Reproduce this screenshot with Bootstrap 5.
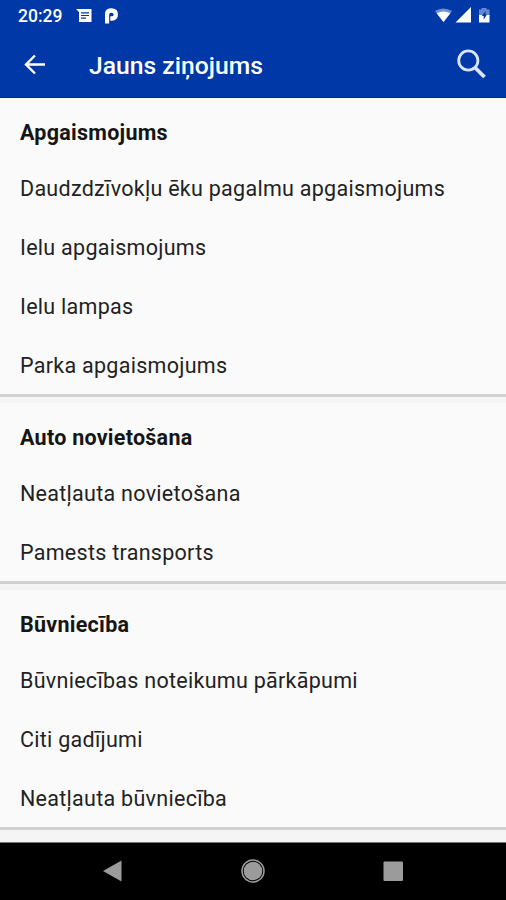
<!DOCTYPE html>
<html lang="lv">
<head>
<meta charset="utf-8">
<meta name="viewport" content="width=device-width, initial-scale=1">
<title>Jauns ziņojums</title>
<link href="https://cdn.jsdelivr.net/npm/bootstrap@5.3.0/dist/css/bootstrap.min.css" rel="stylesheet">
<style>
body{font-family:Roboto,sans-serif;background:#fafafa;color:#151515;height:900px;overflow:hidden}
svg{display:block;flex:none}
.top-area{background:#0038a7;color:#fff;height:98px;border-bottom:1px solid #00249a}
.status{height:32px;padding:0 15px 0 18px}
.clock{font-size:17.500px;font-weight:500;line-height:32px;width:58px;white-space:nowrap}
.appbar{height:66px;padding:0 18px 0 24px}
.title{font-size:24.700px;font-weight:500;line-height:30px;margin:0 0 0 43px;padding-top:2px}
.heading span,.entry span{white-space:nowrap}
.group{background:#fafafa;border-bottom:3px solid #d1d1d1;margin-bottom:6px}
.heading{height:60px;padding:10px 20px 0;font-size:21.500px;letter-spacing:.26px;font-weight:700;margin:0;color:#151515}
.entry{height:59px;padding:4px 20px 0;font-size:21.500px;letter-spacing:.28px;color:#222}
.page{background:#f5f5f5}
.sysbar{height:58px;background:#000;border-top:1px solid #777;padding:0 100px 2px}
</style>
<script src="https://cdn.jsdelivr.net/npm/bootstrap@5.3.0/dist/js/bootstrap.bundle.min.js"></script>
</head>
<body class="d-flex flex-column">
<header class="top-area flex-shrink-0">
  <div class="status d-flex align-items-center">
    <div class="clock">20:29</div>
    <svg width="17" height="14" viewBox="0 0 17 14"><path d="M0 0H15.500V13H3V3Z" fill="#fff"/><path d="M5 3.800H13M5 6.500H13M5 9.200H10" stroke="#0038a7" stroke-width="1.200"/></svg>
    <svg class="ms-2 ps-1" width="24" height="17" viewBox="0 0 20 17"><path d="M2 15.500V6.800Q2 2.500 6.300 2.500Q10.800 2.500 10.800 6.500Q10.800 10.500 6.800 10.500H5.300" fill="none" stroke="#fff" stroke-width="4.300"/></svg>
    <svg class="ms-auto" width="56" height="18" viewBox="0 0 56 18"><path d="M0 4Q8 -1 17 4L8.500 15Z" fill="#6c94d8"/><path d="M1.700 6.200Q8.500 2.600 15.300 6.200L8.500 15Z" fill="#fff"/><path d="M20.500 15.500L36 0V15.500Z" fill="#fff"/><path d="M44 2.500H46.500V1H51.500V2.500H54.500V9H44Z" fill="#6388cf"/><path d="M44 8H54.500V15.500H44Z" fill="#fff"/><path d="M50.500 4L46.800 9H48.700V12.500L52 7.500H50.500Z" fill="#0038a7"/></svg>
  </div>
  <div class="appbar d-flex align-items-center">
    <svg width="22" height="22" viewBox="0 0 22 22"><path d="M21 10.500H2.500M11 1.500L2 10.500L11 19.500" fill="none" stroke="#fff" stroke-width="2.400"/></svg>
    <h1 class="title">Jauns ziņojums</h1>
    <svg class="ms-auto" width="32" height="32" viewBox="0 0 32 32"><circle cx="12.300" cy="11.500" r="9.600" fill="none" stroke="#d9e4ff" stroke-width="2.800"/><path d="M19 18.500L28.500 28" stroke="#d9e4ff" stroke-width="3.800"/></svg>
  </div>
</header>
<main class="page flex-grow-1 overflow-hidden">
  <section class="group">
    <h2 class="heading d-flex align-items-center"><span>Apgaismojums</span></h2>
    <div class="list-group list-group-flush">
      <div class="entry d-flex align-items-center"><span>Daudzdzīvokļu ēku pagalmu apgaismojums</span></div>
      <div class="entry d-flex align-items-center"><span>Ielu apgaismojums</span></div>
      <div class="entry d-flex align-items-center"><span>Ielu lampas</span></div>
      <div class="entry d-flex align-items-center"><span>Parka apgaismojums</span></div>
    </div>
  </section>
  <section class="group">
    <h2 class="heading d-flex align-items-center"><span>Auto novietošana</span></h2>
    <div class="list-group list-group-flush">
      <div class="entry d-flex align-items-center"><span>Neatļauta novietošana</span></div>
      <div class="entry d-flex align-items-center"><span>Pamests transports</span></div>
    </div>
  </section>
  <section class="group">
    <h2 class="heading d-flex align-items-center"><span>Būvniecība</span></h2>
    <div class="list-group list-group-flush">
      <div class="entry d-flex align-items-center"><span>Būvniecības noteikumu pārkāpumi</span></div>
      <div class="entry d-flex align-items-center"><span>Citi gadījumi</span></div>
      <div class="entry d-flex align-items-center"><span>Neatļauta būvniecība</span></div>
    </div>
  </section>
</main>
<nav class="sysbar flex-shrink-0 d-flex justify-content-between align-items-center">
  <svg width="24" height="24" viewBox="0 0 24 24"><path d="M3 12L21.500 1.500V22.500Z" fill="#9b9b9b"/></svg>
  <svg width="24" height="24" viewBox="0 0 24 24"><circle cx="12" cy="12" r="11" fill="none" stroke="#9b9b9b" stroke-width="1.500"/><circle cx="12" cy="12" r="9.300" fill="#9b9b9b"/></svg>
  <svg width="24" height="24" viewBox="0 0 24 24"><rect x="1.500" y="2.500" width="19.500" height="19.500" rx="1" fill="#9b9b9b"/></svg>
</nav>
</body>
</html>
